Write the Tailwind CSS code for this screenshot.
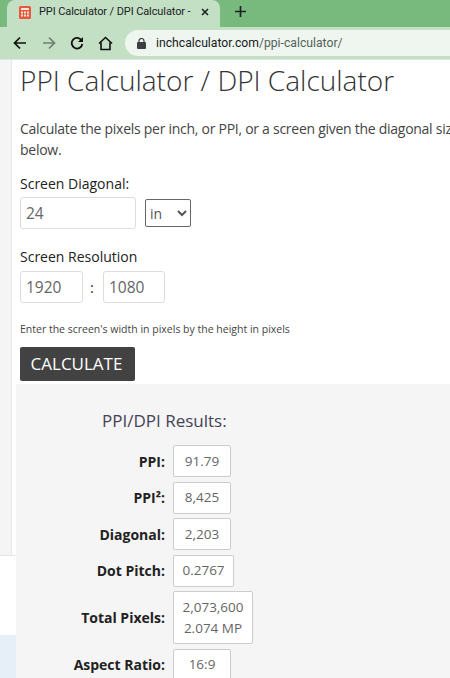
<!DOCTYPE html>
<html lang="en">
<head>
    <meta charset="UTF-8">
    <title>PPI Calculator / DPI Calculator</title>
    <script src="https://cdn.jsdelivr.net/npm/@tailwindcss/browser@4"></script>
</head>
<body class="w-[450px] h-[678px] overflow-hidden bg-white font-['Open_Sans',sans-serif] text-[#333]">
    <!-- browser tab strip -->
    <div class="h-[27px] bg-[#78ba7e] flex items-end">
        <div class="ml-[7px] w-[213px] h-[27px] pb-[3px] bg-[#c3e0c5] rounded-t-lg flex items-center pl-[12px] font-['Roboto',sans-serif] text-[11px] tracking-[-0.1px] text-[#202124]">
            <svg class="w-[12px] h-[13px] shrink-0" viewBox="0 0 12 13">
                <rect width="12" height="13" rx="1.5" fill="#e8583a"/>
                <rect x="2" y="2" width="8" height="2" fill="#fbe3dc"/>
                <path d="M2 5.500h2v2H2zM5 5.500h2v2H5zM8 5.500h2v2H8zM2 8.500h2v2H2zM5 8.500h2v2H5zM8 8.500h2v2H8z" fill="#fbe3dc"/>
            </svg>
            <span class="ml-[8px] w-[154px] overflow-hidden whitespace-nowrap">PPI Calculator / DPI Calculator - (</span>
            <svg class="ml-[8px] w-[8px] h-[8px]" viewBox="0 0 8 8"><path d="M1 1l6 6M7 1L1 7" stroke="#202124" stroke-width="1.600"/></svg>
        </div>
        <svg class="ml-[15px] mb-[10px] w-[11px] h-[11px]" viewBox="0 0 12 12"><path d="M6 0v12M0 6h12" stroke="#202124" stroke-width="1.800"/></svg>
    </div>

    <!-- browser toolbar -->
    <div class="h-[32px] bg-[#c3e0c5] flex items-center pl-[13px]">
        <svg class="w-[14px] h-[14px]" viewBox="0 0 14 14" fill="none"><path d="M13 7H2M7 1.500L1.500 7 7 12.500" stroke="#111" stroke-width="1.700"/></svg>
        <svg class="ml-[15px] w-[14px] h-[14px]" viewBox="0 0 14 14" fill="none"><path d="M1 7h11M7 1.500L12.500 7 7 12.500" stroke="#6f7f72" stroke-width="1.700"/></svg>
        <svg class="ml-[14px] w-[14px] h-[14px]" viewBox="0 0 14 14" fill="none"><path d="M11.600 4.500A5.300 5.300 0 1 0 12.300 8" stroke="#111" stroke-width="1.800"/><path d="M13 1v5H8z" fill="#111"/></svg>
        <svg class="ml-[14px] w-[15px] h-[15px]" viewBox="0 0 15 15" fill="none"><path d="M1 7.500L7.500 1.500 14 7.500M3 6.500V13.500H12V6.500" stroke="#111" stroke-width="1.600"/></svg>
        <div class="ml-[12px] flex-1 h-[26px] bg-[#eef6ef] rounded-l-full flex items-center pl-[12px] font-['Roboto',sans-serif] text-[12.200px]">
            <svg class="w-[9px] h-[11px]" viewBox="0 0 9 11" fill="none"><rect y="4" width="9" height="7" rx="1" fill="#3c4043"/><path d="M2 4.500V3a2.500 2.500 0 0 1 5 0v1.500" stroke="#3c4043" stroke-width="1.200"/></svg>
            <span class="ml-[10px] text-[#202124]">inchcalculator.com<span class="text-[#55625a]">/ppi-calculator/</span></span>
        </div>
    </div>

    <!-- page -->
    <div class="flex h-[619px] overflow-hidden border-t border-[#e3e3e3]">
        <div class="w-[16px] shrink-0 flex flex-col">
            <div class="h-[495px] w-[12px] bg-[#f5f5f5] border-r border-[#e6e6e6]"></div>
            <div class="h-[80px] border-t border-[#e6e6e6]"></div>
            <div class="flex-1 bg-[#e6eff8]"></div>
        </div>
        <div class="flex-1 min-w-0">
            <div class="pl-[4px]">
                <h1 class="text-[28px] leading-[40px] font-light text-[#333] whitespace-nowrap">PPI Calculator / DPI Calculator</h1>
                <p class="mt-[18px] text-[14px] tracking-[-0.27px] leading-[21px] whitespace-nowrap text-[#444]">Calculate the pixels per inch, or PPI, or a screen given the diagonal size<br>below.</p>
                <div class="mt-[14px] text-[14px] leading-[20px] text-[#222]">Screen Diagonal:</div>
                <div class="mt-[3px] flex items-center">
                    <input value="24" class="w-[116px] h-[32px] px-[5px] text-[15.500px] text-[#666] border border-[#ddd] rounded-[3px] bg-white">
                    <select class="ml-[9px] w-[46px] h-[28px] text-[14px] text-[#555] border border-[#666] rounded-[2px] bg-white">
                        <option>in</option>
                    </select>
                </div>
                <div class="mt-[18px] text-[14px] leading-[20px] text-[#222]">Screen Resolution</div>
                <div class="mt-[4px] flex items-center">
                    <input value="1920" class="w-[63px] h-[32px] px-[5px] text-[15.500px] text-[#666] border border-[#ddd] rounded-[3px] bg-white">
                    <span class="w-[20px] pr-[2px] text-center text-[15px]">:</span>
                    <input value="1080" class="w-[62px] h-[32px] px-[5px] text-[15.500px] text-[#666] border border-[#ddd] rounded-[3px] bg-white">
                </div>
                <p class="mt-[18px] text-[10.500px] leading-[16px] text-[#444] whitespace-nowrap">Enter the screen's width in pixels by the height in pixels</p>
                <button class="mt-[10px] block w-[115px] h-[34px] pr-[2px] bg-[#424242] text-white text-[17px] rounded-[2px]">CALCULATE</button>
            </div>
            <div class="mt-[3px] bg-[#f5f5f5] pt-[26px] h-[300px]">
                <h2 class="ml-[86px] text-[17px] leading-[22px] text-[#445]">PPI/DPI Results:</h2>
                <div class="mt-[13px] flex flex-col gap-[4.500px] text-[14px]">
                    <div class="flex items-center">
                        <div class="w-[149px] text-right font-bold text-[#222]">PPI:</div>
                        <div class="ml-[8px] w-[58px] h-[32px] flex items-center justify-center bg-white border border-[#ccc] rounded-[2px] text-[#666] text-[13.500px]">91.79</div>
                    </div>
                    <div class="flex items-center">
                        <div class="w-[149px] text-right font-bold text-[#222]">PPI²:</div>
                        <div class="ml-[8px] w-[58px] h-[32px] flex items-center justify-center bg-white border border-[#ccc] rounded-[2px] text-[#666] text-[13.500px]">8,425</div>
                    </div>
                    <div class="flex items-center">
                        <div class="w-[149px] text-right font-bold text-[#222]">Diagonal:</div>
                        <div class="ml-[8px] w-[58px] h-[32px] flex items-center justify-center bg-white border border-[#ccc] rounded-[2px] text-[#666] text-[13.500px]">2,203</div>
                    </div>
                    <div class="flex items-center">
                        <div class="w-[149px] text-right font-bold text-[#222]">Dot Pitch:</div>
                        <div class="ml-[8px] w-[61px] h-[32px] flex items-center justify-center bg-white border border-[#ccc] rounded-[2px] text-[#666] text-[13.500px]">0.2767</div>
                    </div>
                    <div class="flex items-center">
                        <div class="w-[149px] text-right font-bold text-[#222]">Total Pixels:</div>
                        <div class="ml-[8px] w-[80px] h-[53px] flex items-center justify-center text-center leading-[21px] bg-white border border-[#ccc] rounded-[2px] text-[#666] text-[13.500px]">2,073,600<br>2.074 MP</div>
                    </div>
                    <div class="flex items-center">
                        <div class="w-[149px] text-right font-bold text-[#222]">Aspect Ratio:</div>
                        <div class="ml-[8px] w-[58px] h-[32px] flex items-center justify-center bg-white border border-[#ccc] rounded-[2px] text-[#666] text-[13.500px]">16:9</div>
                    </div>
                </div>
            </div>
        </div>
    </div>
</body>
</html>
